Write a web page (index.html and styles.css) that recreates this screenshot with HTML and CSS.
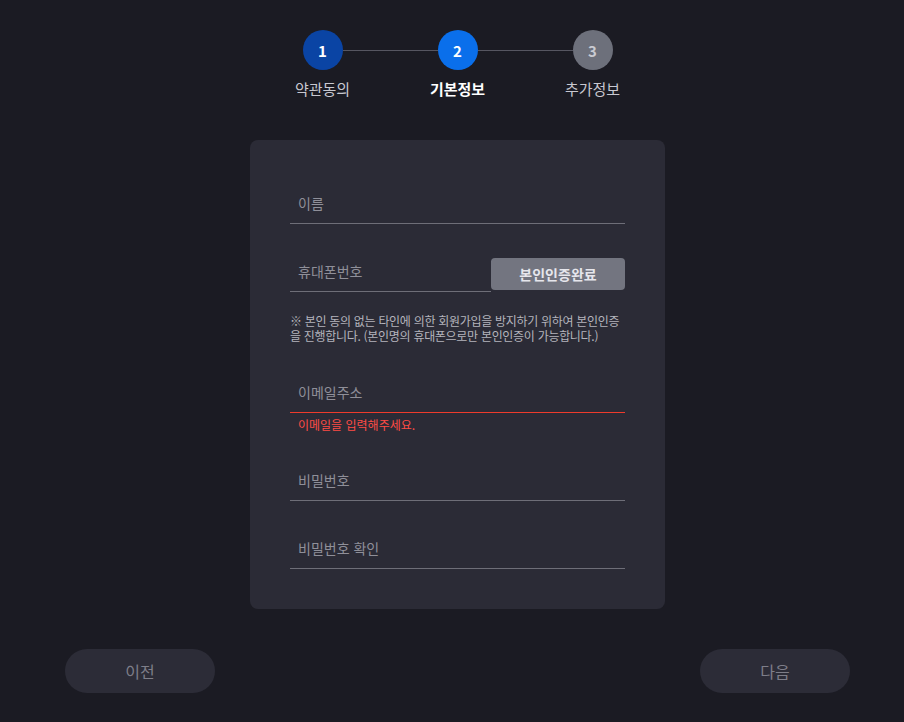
FILE: index.html
```html
<!DOCTYPE html>
<html lang="ko">
<head>
    <meta charset="UTF-8">
    <title>회원가입 - 기본정보</title>
    <link rel="stylesheet" href="styles.css">
</head>
<body>
    <div class="page">
        <div class="steps">
            <div class="step-track">
                <span class="circle done">1</span>
                <span class="connector"></span>
                <span class="circle active">2</span>
                <span class="connector"></span>
                <span class="circle todo">3</span>
            </div>
            <div class="step-labels">
                <span class="step-label">약관동의</span>
                <span class="step-label current">기본정보</span>
                <span class="step-label">추가정보</span>
            </div>
        </div>

        <div class="card">
            <div class="field">
                <input type="text" placeholder="이름">
            </div>

            <div class="field phone-row">
                <input type="text" placeholder="휴대폰번호">
                <button class="verify-btn">본인인증완료</button>
            </div>
            <p class="notice">※ 본인 동의 없는 타인에 의한 회원가입을 방지하기 위하여 본인인증을 진행합니다. (본인명의 휴대폰으로만 본인인증이 가능합니다.)</p>

            <div class="field error">
                <input type="email" placeholder="이메일주소">
            </div>
            <p class="error-msg">이메일을 입력해주세요.</p>

            <div class="field">
                <input type="password" placeholder="비밀번호">
            </div>

            <div class="field">
                <input type="password" placeholder="비밀번호 확인">
            </div>
        </div>

        <div class="nav-buttons">
            <button class="nav-btn">이전</button>
            <button class="nav-btn">다음</button>
        </div>
    </div>
</body>
</html>
```

FILE: styles.css
```css
body {
    margin: 0;
    background: #1b1b23;
    font-family: "Noto Sans CJK KR", "Noto Sans", sans-serif;
    color: #c8c8d0;
}
.page {
    padding: 30px 0 0 11px;
    display: flex;
    flex-direction: column;
    align-items: center;
}

/* step indicator */
.steps {
    display: flex;
    flex-direction: column;
    align-items: center;
}
.step-track {
    display: flex;
    align-items: center;
}
.circle {
    width: 40px;
    height: 40px;
    border-radius: 50%;
    display: flex;
    align-items: center;
    justify-content: center;
    font-size: 15px;
    font-weight: bold;
    color: #ffffff;
}
.circle.done {
    background: #0a44a4;
}
.circle.active {
    background: #0a6feb;
}
.circle.todo {
    background: #6d707b;
    color: #c9cbd2;
}
.connector {
    width: 95px;
    height: 1px;
    background: #565661;
}
.step-labels {
    display: flex;
    margin-top: 9px;
}
.step-label {
    width: 135px;
    text-align: center;
    font-size: 15px;
    line-height: 20px;
    color: #c8c8d0;
}
.step-label.current {
    color: #ffffff;
    font-weight: bold;
}

/* form card */
.card {
    width: 335px;
    margin-top: 41px;
    padding: 43px 40px 40px;
    background: #2b2b36;
    border-radius: 8px;
}
.field {
    display: flex;
    align-items: center;
    margin-bottom: 27px;
}
.field input {
    flex: 1;
    min-width: 0;
    height: 40px;
    padding: 0 8px;
    border: none;
    border-bottom: 1px solid #6e6e78;
    background: transparent;
    font-family: inherit;
    font-size: 14px;
    color: #e0e0e6;
    outline: none;
}
.field input::placeholder {
    color: #8f8f99;
}
.field.error input {
    border-bottom-color: #ee3b2c;
}
.phone-row {
    margin-bottom: 0;
}
.verify-btn {
    align-self: flex-end;
    width: 134px;
    height: 32px;
    margin-bottom: 2px;
    border: none;
    border-radius: 4px;
    background: #737580;
    color: #e6e6ec;
    font-family: inherit;
    font-size: 14px;
    font-weight: bold;
}
.notice {
    margin: 21px 0 29px;
    font-size: 12px;
    line-height: 15px;
    letter-spacing: -0.3px;
    color: #b4b4bc;
    word-break: break-all;
}
.error-msg {
    margin: -23px 0 27px 8px;
    font-size: 12px;
    line-height: 16px;
    color: #ff4b45;
}
.card .field:last-child {
    margin-bottom: 0;
}

/* bottom navigation */
.nav-buttons {
    align-self: stretch;
    display: flex;
    justify-content: space-between;
    padding: 0 54px;
    margin-top: 40px;
}
.nav-btn {
    width: 150px;
    height: 44px;
    border: none;
    border-radius: 22px;
    background: #2c2c37;
    color: #7e7e89;
    font-family: inherit;
    font-size: 16px;
}
```
